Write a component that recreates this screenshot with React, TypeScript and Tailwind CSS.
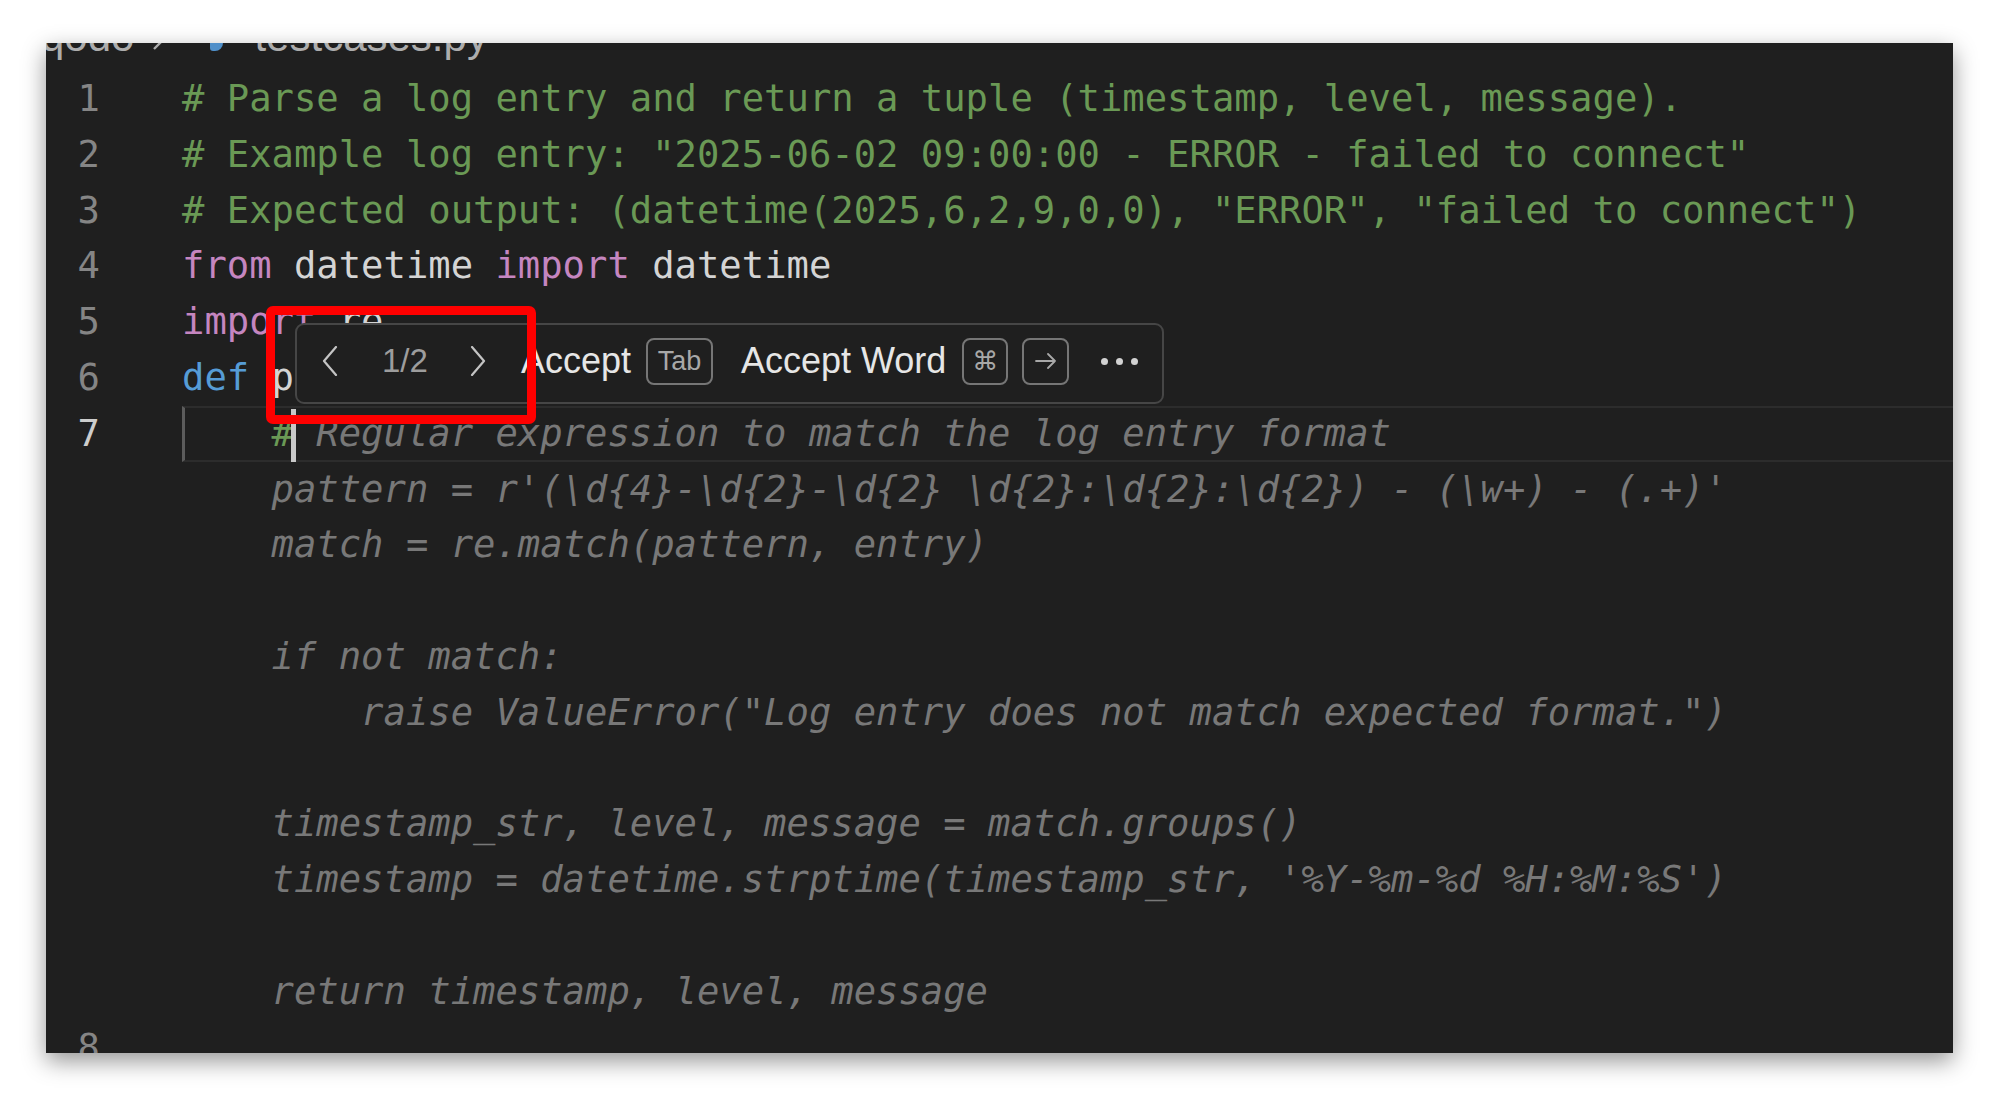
import React from "react";

const mono = "font-['DejaVu_Sans_Mono',monospace]";
const sans = "font-['Liberation_Sans',Arial,sans-serif]";

const comment = "text-[#6a9955]";
const keyword = "text-[#c586c0]";
const storage = "text-[#569cd6]";
const plain = "text-[#d4d4d4]";
const ghost = "text-[#787878] italic";

type Row = {
  num?: string;
  active?: boolean;
  content?: React.ReactNode;
};

const rows: Row[] = [
  {
    num: "1",
    content: (
      <span className={comment}>
        # Parse a log entry and return a tuple (timestamp, level, message).
      </span>
    ),
  },
  {
    num: "2",
    content: (
      <span className={comment}>
        # Example log entry: "2025-06-02 09:00:00 - ERROR - failed to connect"
      </span>
    ),
  },
  {
    num: "3",
    content: (
      <span className={comment}>
        # Expected output: (datetime(2025,6,2,9,0,0), "ERROR", "failed to connect")
      </span>
    ),
  },
  {
    num: "4",
    content: (
      <>
        <span className={keyword}>from</span>
        <span className={plain}> datetime </span>
        <span className={keyword}>import</span>
        <span className={plain}> datetime</span>
      </>
    ),
  },
  {
    num: "5",
    content: (
      <>
        <span className={keyword}>import</span>
        <span className={plain}> re</span>
      </>
    ),
  },
  {
    num: "6",
    content: (
      <>
        <span className={storage}>def</span>
        <span className={plain}> p</span>
      </>
    ),
  },
  {
    num: "7",
    active: true,
    content: (
      <>
        <span className={comment}>{"    #"}</span>
        <span className="inline-block w-[5px] h-[53px] -ml-[3px] -mr-[2px] bg-[#c8c8c8] align-middle" />
        <span className={ghost}> Regular expression to match the log entry format</span>
      </>
    ),
  },
  {
    content: (
      <span className={ghost}>
        {"    pattern = r'(\\d{4}-\\d{2}-\\d{2} \\d{2}:\\d{2}:\\d{2}) - (\\w+) - (.+)'"}
      </span>
    ),
  },
  { content: <span className={ghost}>{"    match = re.match(pattern, entry)"}</span> },
  {},
  { content: <span className={ghost}>{"    if not match:"}</span> },
  {
    content: (
      <span className={ghost}>
        {'        raise ValueError("Log entry does not match expected format.")'}
      </span>
    ),
  },
  {},
  {
    content: (
      <span className={ghost}>{"    timestamp_str, level, message = match.groups()"}</span>
    ),
  },
  {
    content: (
      <span className={ghost}>
        {"    timestamp = datetime.strptime(timestamp_str, '%Y-%m-%d %H:%M:%S')"}
      </span>
    ),
  },
  {},
  { content: <span className={ghost}>{"    return timestamp, level, message"}</span> },
  { num: "8" },
];

function Chevron({ dir }: { dir: "left" | "right" }) {
  return (
    <svg width="16" height="30" viewBox="0 0 16 30" fill="none">
      <polyline
        points={dir === "left" ? "14,1 2,15 14,29" : "2,1 14,15 2,29"}
        stroke="#c4c4c4"
        strokeWidth="2.2"
        strokeLinecap="round"
        strokeLinejoin="round"
      />
    </svg>
  );
}

function Kbd({ className, children }: { className: string; children: React.ReactNode }) {
  return (
    <div
      className={`h-[47px] rounded-[8px] border-2 border-[#767676] flex items-center justify-center text-[#a8a8a8] ${className}`}
    >
      {children}
    </div>
  );
}

function SuggestWidget() {
  return (
    <div
      className={`absolute left-[249px] top-[280px] w-[869px] h-[81px] rounded-[9px] border-2 border-[#464646] bg-[#1f1f1f] flex items-center pl-[25px] pb-[5px] ${sans}`}
    >
      <Chevron dir="left" />
      <span className="ml-[44px] text-[33px] text-[#9d9d9d]">1/2</span>
      <div className="ml-[42px]">
        <Chevron dir="right" />
      </div>
      <span className="ml-[35px] text-[36px] text-[#e6e6e6]">Accept</span>
      <Kbd className="ml-[15px] w-[67px] text-[27px]">Tab</Kbd>
      <span className="ml-[28px] text-[36px] text-[#e6e6e6]">Accept Word</span>
      <Kbd className="ml-[16px] w-[46px] text-[26px] font-['DejaVu_Sans',sans-serif]">⌘</Kbd>
      <Kbd className="ml-[14px] w-[47px]">
        <svg width="22" height="16" viewBox="0 0 22 16" fill="none">
          <path
            d="M1 8h19M13 1l7 7-7 7"
            stroke="#a8a8a8"
            strokeWidth="1.8"
            strokeLinecap="round"
            strokeLinejoin="round"
          />
        </svg>
      </Kbd>
      <div className="ml-[32px] flex gap-[8px]">
        <div className="w-[7px] h-[7px] rounded-full bg-[#d2d2d2]" />
        <div className="w-[7px] h-[7px] rounded-full bg-[#d2d2d2]" />
        <div className="w-[7px] h-[7px] rounded-full bg-[#d2d2d2]" />
      </div>
    </div>
  );
}

export default function App() {
  return (
    <div className="w-full h-[1103px] bg-white pt-[43px] pl-[46px] overflow-hidden">
      <div className="relative w-[1907px] h-[1010px] bg-[#1f1f1f] overflow-hidden shadow-[0_8px_22px_rgba(0,0,0,0.42)]">
        {/* breadcrumb, mostly cut off by the crop */}
        <div
          className={`-mt-[27px] h-[42px] flex items-baseline whitespace-nowrap text-[42px] leading-[42px] text-[#adadad] ${sans}`}
        >
          <span className="-ml-[5px]">qodo</span>
          <svg className="ml-[18px]" width="14" height="24" viewBox="0 0 14 24" fill="none">
            <polyline points="2,2 12,12 2,22" stroke="#adadad" strokeWidth="2.4" />
          </svg>
          <svg className="ml-[44px]" width="13" height="20" viewBox="0 0 13 20">
            <path d="M3 0h7a3 3 0 0 1 3 3v9a8 8 0 0 1-8 8H3a3 3 0 0 1-3-3V3a3 3 0 0 1 3-3z" fill="#4f8fc9" />
          </svg>
          <span className="ml-[31px]">testcases.py</span>
        </div>

        <div className={`mt-[13px] ${mono} text-[37.2px] leading-[55.8px]`}>
          {rows.map((row, i) => (
            <div key={i} className="flex h-[55.8px]">
              <div
                className={`w-[54px] shrink-0 text-right ${row.active ? "text-[#cccccc]" : "text-[#858585]"}`}
              >
                {row.num ?? ""}
              </div>
              <div className="relative ml-[82px] flex-1 whitespace-pre">
                {row.active && (
                  <div className="absolute inset-0 border-y-2 border-[#2c2c2c] border-l-[3px] border-l-[#5c5c5c]" />
                )}
                <span className="relative">{row.content}</span>
              </div>
            </div>
          ))}
        </div>

        <SuggestWidget />

        {/* red annotation frame */}
        <div className="absolute left-[220px] top-[263px] w-[270px] h-[118px] border-[9px] border-[#ff0000] rounded-[7px]" />
      </div>
    </div>
  );
}
